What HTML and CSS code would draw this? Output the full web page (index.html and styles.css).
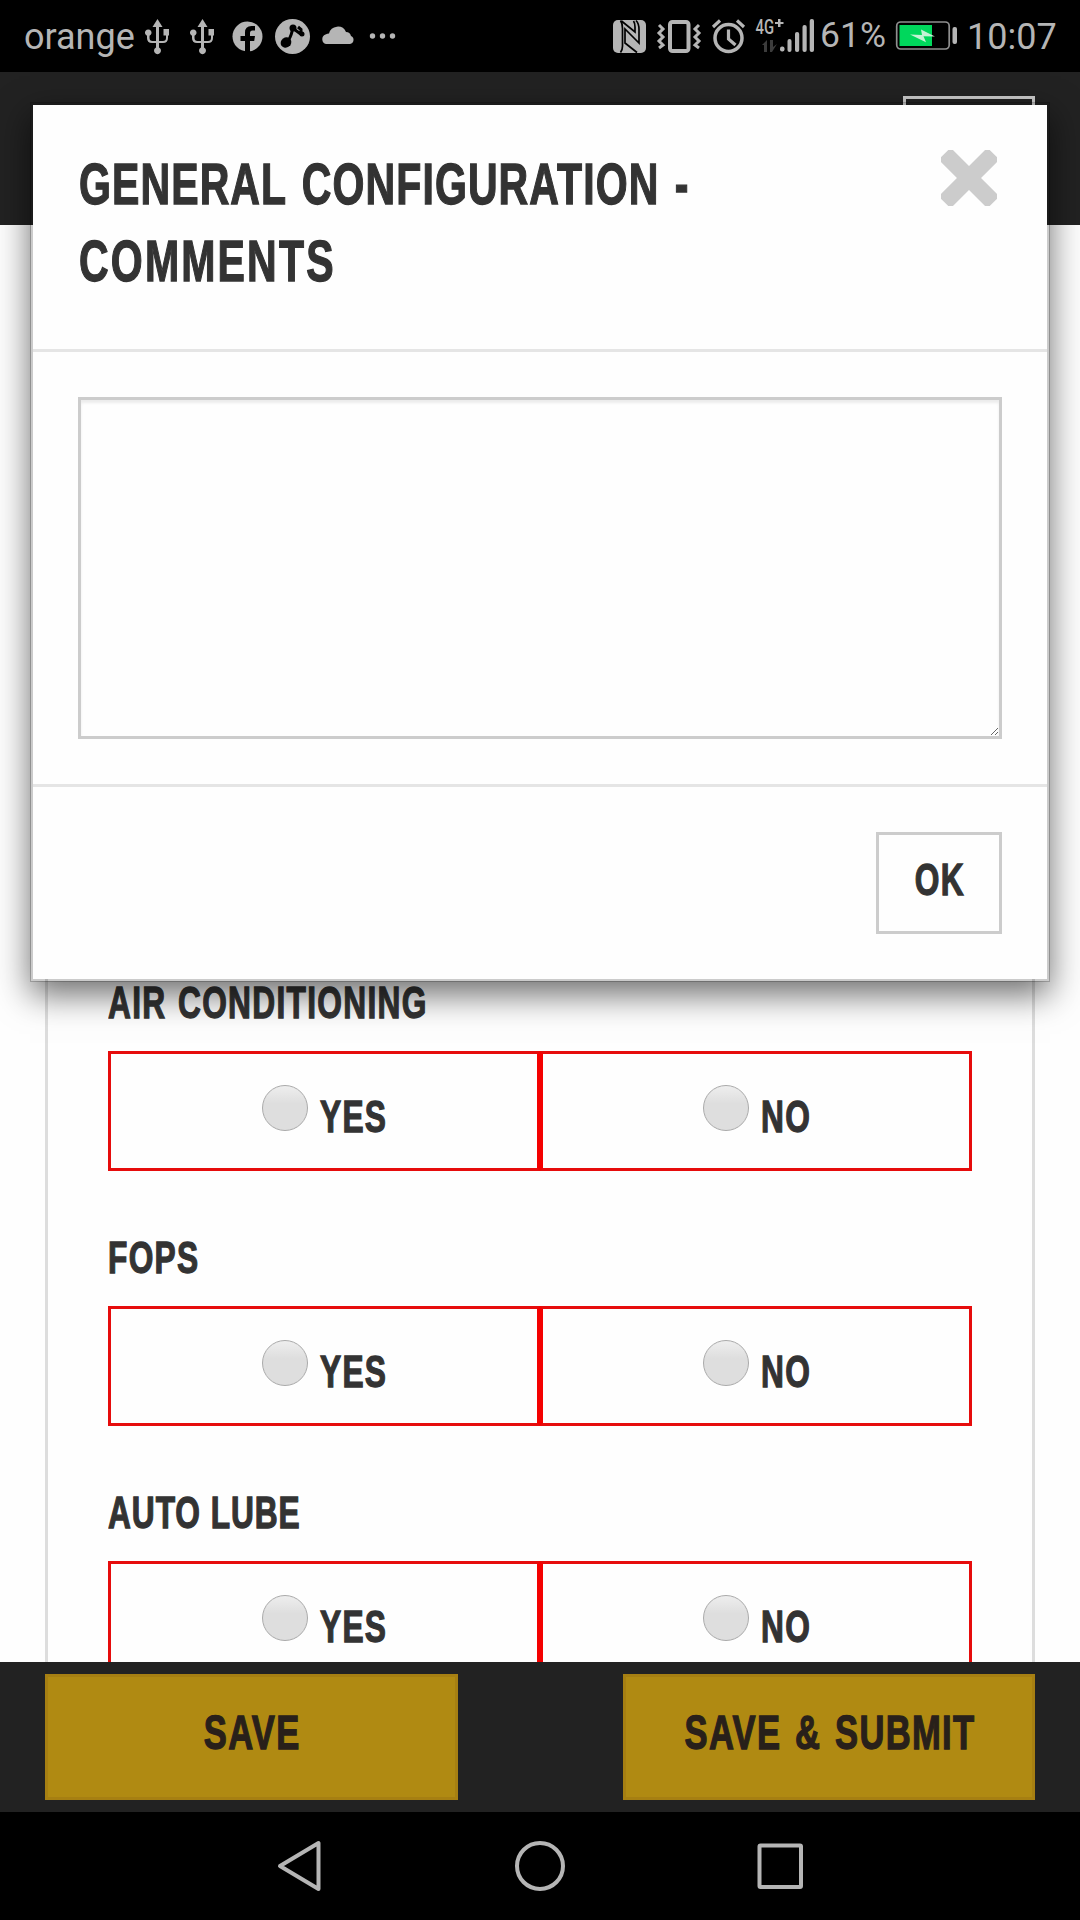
FILE: index.html
```html
<!DOCTYPE html>
<html lang="en">
<head>
    <meta charset="UTF-8">
    <meta name="viewport" content="width=device-width, initial-scale=1.0">
    <title>General Configuration</title>
    <link rel="stylesheet" href="styles.css">
</head>
<body>
    <div class="status-bar">
        <span class="carrier">orange</span>
        <svg class="status-left" width="260" height="72" viewBox="140 0 260 72" fill="#b5b5b5">
            <g id="usb">
                <path d="M157.500 19l5 8h-3.500v14h4q3 0 3-3v-2.500h-2.500v-6.500h5.500v6.500h-1v2.500q0 5-5 5h-4v4.500a3.500 3.500 0 1 1-3 0V43h-4q-5 0-5-5v-2.200a3.300 3.300 0 1 1 2.500 0V38q0 3 3 3h3.500V27H152.500z"/>
            </g>
            <use href="#usb" x="45"/>
            <circle cx="247.500" cy="36.500" r="15"/>
            <path fill="#000" d="M245 52V41h-4.500v-5H245v-3.500q0-6.500 6.500-6.500h3.500v4.500h-2.500q-2.500 0-2.500 2.500v3h5l-.8 5H250v11z"/>
            <circle cx="292.500" cy="36.500" r="17.500"/>
            <g fill="#000">
                <ellipse cx="286" cy="42.500" rx="5.500" ry="5" transform="rotate(-35 286 42.500)"/>
                <circle cx="293" cy="28" r="3.500"/>
                <circle cx="302" cy="34" r="2.500"/>
            </g>
            <path d="M288 41q4-6 4.500-13l9.500 7M298 27l3 2.500v4" fill="none" stroke="#000" stroke-width="3"/>
            <path d="M326 44a5 5 0 0 1-.5-9.500q2-1 3.500-1a9 9 0 0 1 17-1.500q4 0 5 4a4.200 4.200 0 0 1-1 8z"/>
            <circle cx="372.500" cy="36" r="2.700"/>
            <circle cx="382.500" cy="36" r="2.700"/>
            <circle cx="392.500" cy="36" r="2.700"/>
        </svg>
        <svg class="status-right" width="210" height="72" viewBox="610 0 210 72" fill="#b5b5b5">
            <!-- nfc -->
            <rect x="613" y="20" width="33" height="33" rx="5"/>
            <path fill="none" stroke="#000" stroke-width="1.700" d="M620.500 20.500q2 3 2 8V46q0 4-2 6.500M636 20.500q3 3 3 9V43l-14-14V43l12 9.500M621.500 21l13.500 11v-5q0-4-1.500-6"/>
            <!-- vibrate -->
            <rect x="670" y="22" width="18.500" height="29" rx="2.500" fill="none" stroke="#b5b5b5" stroke-width="4"/>
            <path fill="none" stroke="#b5b5b5" stroke-width="3" d="M659 25l4 4-4 4 4 4-4 4 4 4-4 3M699 25l-4 4 4 4-4 4 4 4-4 4 4 3"/>
            <!-- alarm -->
            <circle cx="728.500" cy="38" r="13.500" fill="none" stroke="#b5b5b5" stroke-width="3.500"/>
            <path fill="none" stroke="#b5b5b5" stroke-width="3.200" d="M713 27l7-6.500M744 27l-7-6.500M728.500 29.500V39l7 6"/>
            <text class="net-type" x="755.500" y="34" textLength="18.500" lengthAdjust="spacingAndGlyphs">4G</text>
            <path d="M778 19h2.500v3h3v2h-3v3H778v-3h-3v-2h3z"/>
            <path fill="#3c3c3c" d="M762 45l5-5v12h-3v-7zM770 40h3v7l4-3-5 8h-2z"/>
            <!-- signal -->
            <rect x="780" y="46.500" width="4.500" height="5" rx="2"/>
            <rect x="787.500" y="39" width="4" height="13" rx="2"/>
            <rect x="795" y="32" width="4.200" height="20" rx="2"/>
            <rect x="802.500" y="25" width="4.200" height="27" rx="2"/>
            <rect x="809.700" y="19" width="4.300" height="33" rx="2"/>
        </svg>
        <span class="battery-level">61%</span>
        <svg class="battery" width="64" height="72" viewBox="895 0 64 72">
            <rect x="896.700" y="22" width="52.500" height="27" rx="4" fill="none" stroke="#8f8f8f" stroke-width="1.700"/>
            <rect x="899.500" y="25" width="32.500" height="21" fill="#00d75c"/>
            <path d="M910 34.500l12 .5-1-5.500 14 7-11.500-.2 2.500 6z" fill="#c4f3d4"/>
            <rect x="952.500" y="27" width="4.500" height="17" rx="2" fill="#b5b5b5"/>
        </svg>
        <span class="clock">10:07</span>
    </div>

    <div class="page-header">
        <div class="menu-button"></div>
    </div>

    <div class="content">
        <div class="card">
            <div class="field">
                <div class="field-label"><span class="condensed">AIR CONDITIONING</span></div>
                <div class="options">
                    <div class="option"><span class="radio"></span><span class="condensed yes">YES</span></div>
                    <div class="option"><span class="radio"></span><span class="condensed no">NO</span></div>
                </div>
            </div>
            <div class="field">
                <div class="field-label"><span class="condensed">FOPS</span></div>
                <div class="options">
                    <div class="option"><span class="radio"></span><span class="condensed yes">YES</span></div>
                    <div class="option"><span class="radio"></span><span class="condensed no">NO</span></div>
                </div>
            </div>
            <div class="field">
                <div class="field-label tight"><span class="condensed">AUTO LUBE</span></div>
                <div class="options">
                    <div class="option"><span class="radio"></span><span class="condensed yes">YES</span></div>
                    <div class="option"><span class="radio"></span><span class="condensed no">NO</span></div>
                </div>
            </div>
        </div>
    </div>

    <div class="action-bar">
        <button class="save-button"><span class="condensed">SAVE</span></button>
        <button class="save-button submit"><span class="condensed">SAVE &amp; SUBMIT</span></button>
    </div>

    <div class="nav-bar">
        <svg width="540" height="108" viewBox="270 1812 540 108" fill="none" stroke="#b5b5b5" stroke-width="4" stroke-linejoin="round">
            <path d="M280 1866l38.500-23v46z"/>
            <circle cx="540" cy="1866" r="23"/>
            <rect x="759.500" y="1845.500" width="41.500" height="41.500" rx="1"/>
        </svg>
    </div>

    <div class="modal">
        <div class="modal-header">
            <h2><span class="condensed">GENERAL CONFIGURATION -</span><br><span class="condensed last-line">COMMENTS</span></h2>
            <svg class="close" width="56" height="56" viewBox="0 0 56 56" fill="#ccc">
                <rect x="-6.500" y="19.500" width="69" height="17" rx="4" transform="rotate(45 28 28)"/>
                <rect x="-6.500" y="19.500" width="69" height="17" rx="4" transform="rotate(-45 28 28)"/>
            </svg>
        </div>
        <div class="modal-body">
            <textarea></textarea>
        </div>
        <div class="modal-footer">
            <button class="ok-button"><span class="condensed">OK</span></button>
        </div>
    </div>
</body>
</html>
```
FILE: styles.css
```css
* {
    box-sizing: border-box;
}

body {
    margin: 0;
    position: relative;
    width: 1080px;
    height: 1920px;
    overflow: hidden;
    background-color: #fefefe;
    color: #333;
    font-family: "Liberation Sans", Arial, sans-serif;
    font-weight: bold;
}

.condensed {
    display: inline-block;
    white-space: nowrap;
    letter-spacing: 1.8px;
    word-spacing: 2px;
    transform: scaleX(0.72);
    transform-origin: left center;
    -webkit-text-stroke: 1.3px currentColor;
}

/* Status bar */
.status-bar {
    display: flex;
    height: 72px;
    background-color: #000;
    color: #b5b5b5;
    font-family: Roboto, sans-serif;
    font-weight: normal;
    font-size: 36px;
    line-height: 75px;
    white-space: nowrap;
}

.status-bar svg {
    flex: none;
}

.carrier {
    width: 140px;
    padding-left: 24px;
}

.status-right {
    margin-left: 210px;
}

.net-type {
    font-size: 20px;
    font-weight: 500;
}

.battery-level {
    width: 75px;
    line-height: 70px;
    font-size: 35.5px;
}

.clock {
    padding-left: 8px;
}

/* Header */
.page-header {
    display: flex;
    justify-content: flex-end;
    height: 153px;
    padding: 24px 45px;
    background-color: #222;
}

.menu-button {
    width: 132px;
    height: 102px;
    border: 3px solid #ccc;
}

/* Form */
.content {
    height: 1437px;
    padding: 0 45px;
    overflow: hidden;
}

.card {
    padding: 755px 60px 0;
    height: 1500px;
    border: 3px solid #ddd;
    border-width: 0 3px;
}

.field {
    margin-bottom: 64px;
}

.field-label {
    height: 45px;
    margin-bottom: 26px;
    font-size: 44px;
    line-height: 45px;
}

.tight .condensed {
    letter-spacing: 1.3px;
    word-spacing: 0;
}

.options {
    display: flex;
    height: 120px;
}

.option {
    display: flex;
    justify-content: center;
    flex: 1;
    border: 3px solid #e60c0c;
    font-size: 44px;
    line-height: 45px;
}

.option:first-child {
    border-right-color: #f40000;
}

.option:last-child {
    border-left-color: #f40000;
}

.radio {
    width: 46px;
    height: 46px;
    margin: 31px 12px 0 0;
    border: 1px solid #aaa;
    border-radius: 50%;
    background: linear-gradient(#eee, #dedede 40%, #dedede);
}

.option .condensed {
    margin-top: 40px;
    height: 45px;
}

.yes {
    width: 67px;
}

.no {
    width: 48px;
}

/* Bottom actions */
.action-bar {
    display: flex;
    justify-content: space-between;
    height: 150px;
    padding: 12px 45px;
    background-color: #222;
}

.save-button {
    width: 413px;
    height: 126px;
    padding: 0 0 10px;
    border: 3px solid #a67f12;
    background-color: #b08a12;
    color: #28201a;
    font: bold 48px "Liberation Sans", Arial, sans-serif;
}

.submit {
    width: 412px;
}

.submit .condensed {
    word-spacing: 4px;
}

.save-button .condensed,
.ok-button .condensed {
    margin-left: 2px;
    transform-origin: center;
}

.nav-bar {
    display: flex;
    justify-content: center;
    height: 108px;
    background-color: #000;
}

/* Comments dialog */
.modal {
    position: absolute;
    top: 102px;
    left: 30px;
    width: 1020px;
    height: 880px;
    border: 3px solid rgba(0, 0, 0, 0.2);
    background-color: #fefefe;
    background-clip: padding-box;
    box-shadow: 0 13px 32px rgba(0, 0, 0, 0.56);
}

.modal-header {
    display: flex;
    justify-content: space-between;
    height: 247px;
    padding: 41px 50px 0 46px;
    border-bottom: 3px solid #e5e5e5;
}

.modal-header h2 {
    margin: 0;
    font-size: 57px;
    line-height: 77px;
}

.modal-header .condensed {
    letter-spacing: 1.5px;
    word-spacing: 4px;
}

.modal-header .last-line {
    letter-spacing: 3px;
}

.close {
    flex: none;
    margin-top: 4px;
}

.modal-body {
    height: 435px;
    padding: 45px;
    border-bottom: 3px solid #e5e5e5;
}

textarea {
    display: block;
    width: 924px;
    height: 342px;
    border: 3px solid #ccc;
    border-radius: 0;
    background-color: #fefefe;
    box-shadow: inset 0 3px 3px rgba(0, 0, 0, 0.075);
}

.modal-footer {
    display: flex;
    justify-content: flex-end;
    padding: 45px;
}

.ok-button {
    width: 126px;
    height: 102px;
    padding: 0 0 6px;
    border: 3px solid #ccc;
    background-color: #fefefe;
    color: #333;
    font: bold 44px "Liberation Sans", Arial, sans-serif;
}
```
